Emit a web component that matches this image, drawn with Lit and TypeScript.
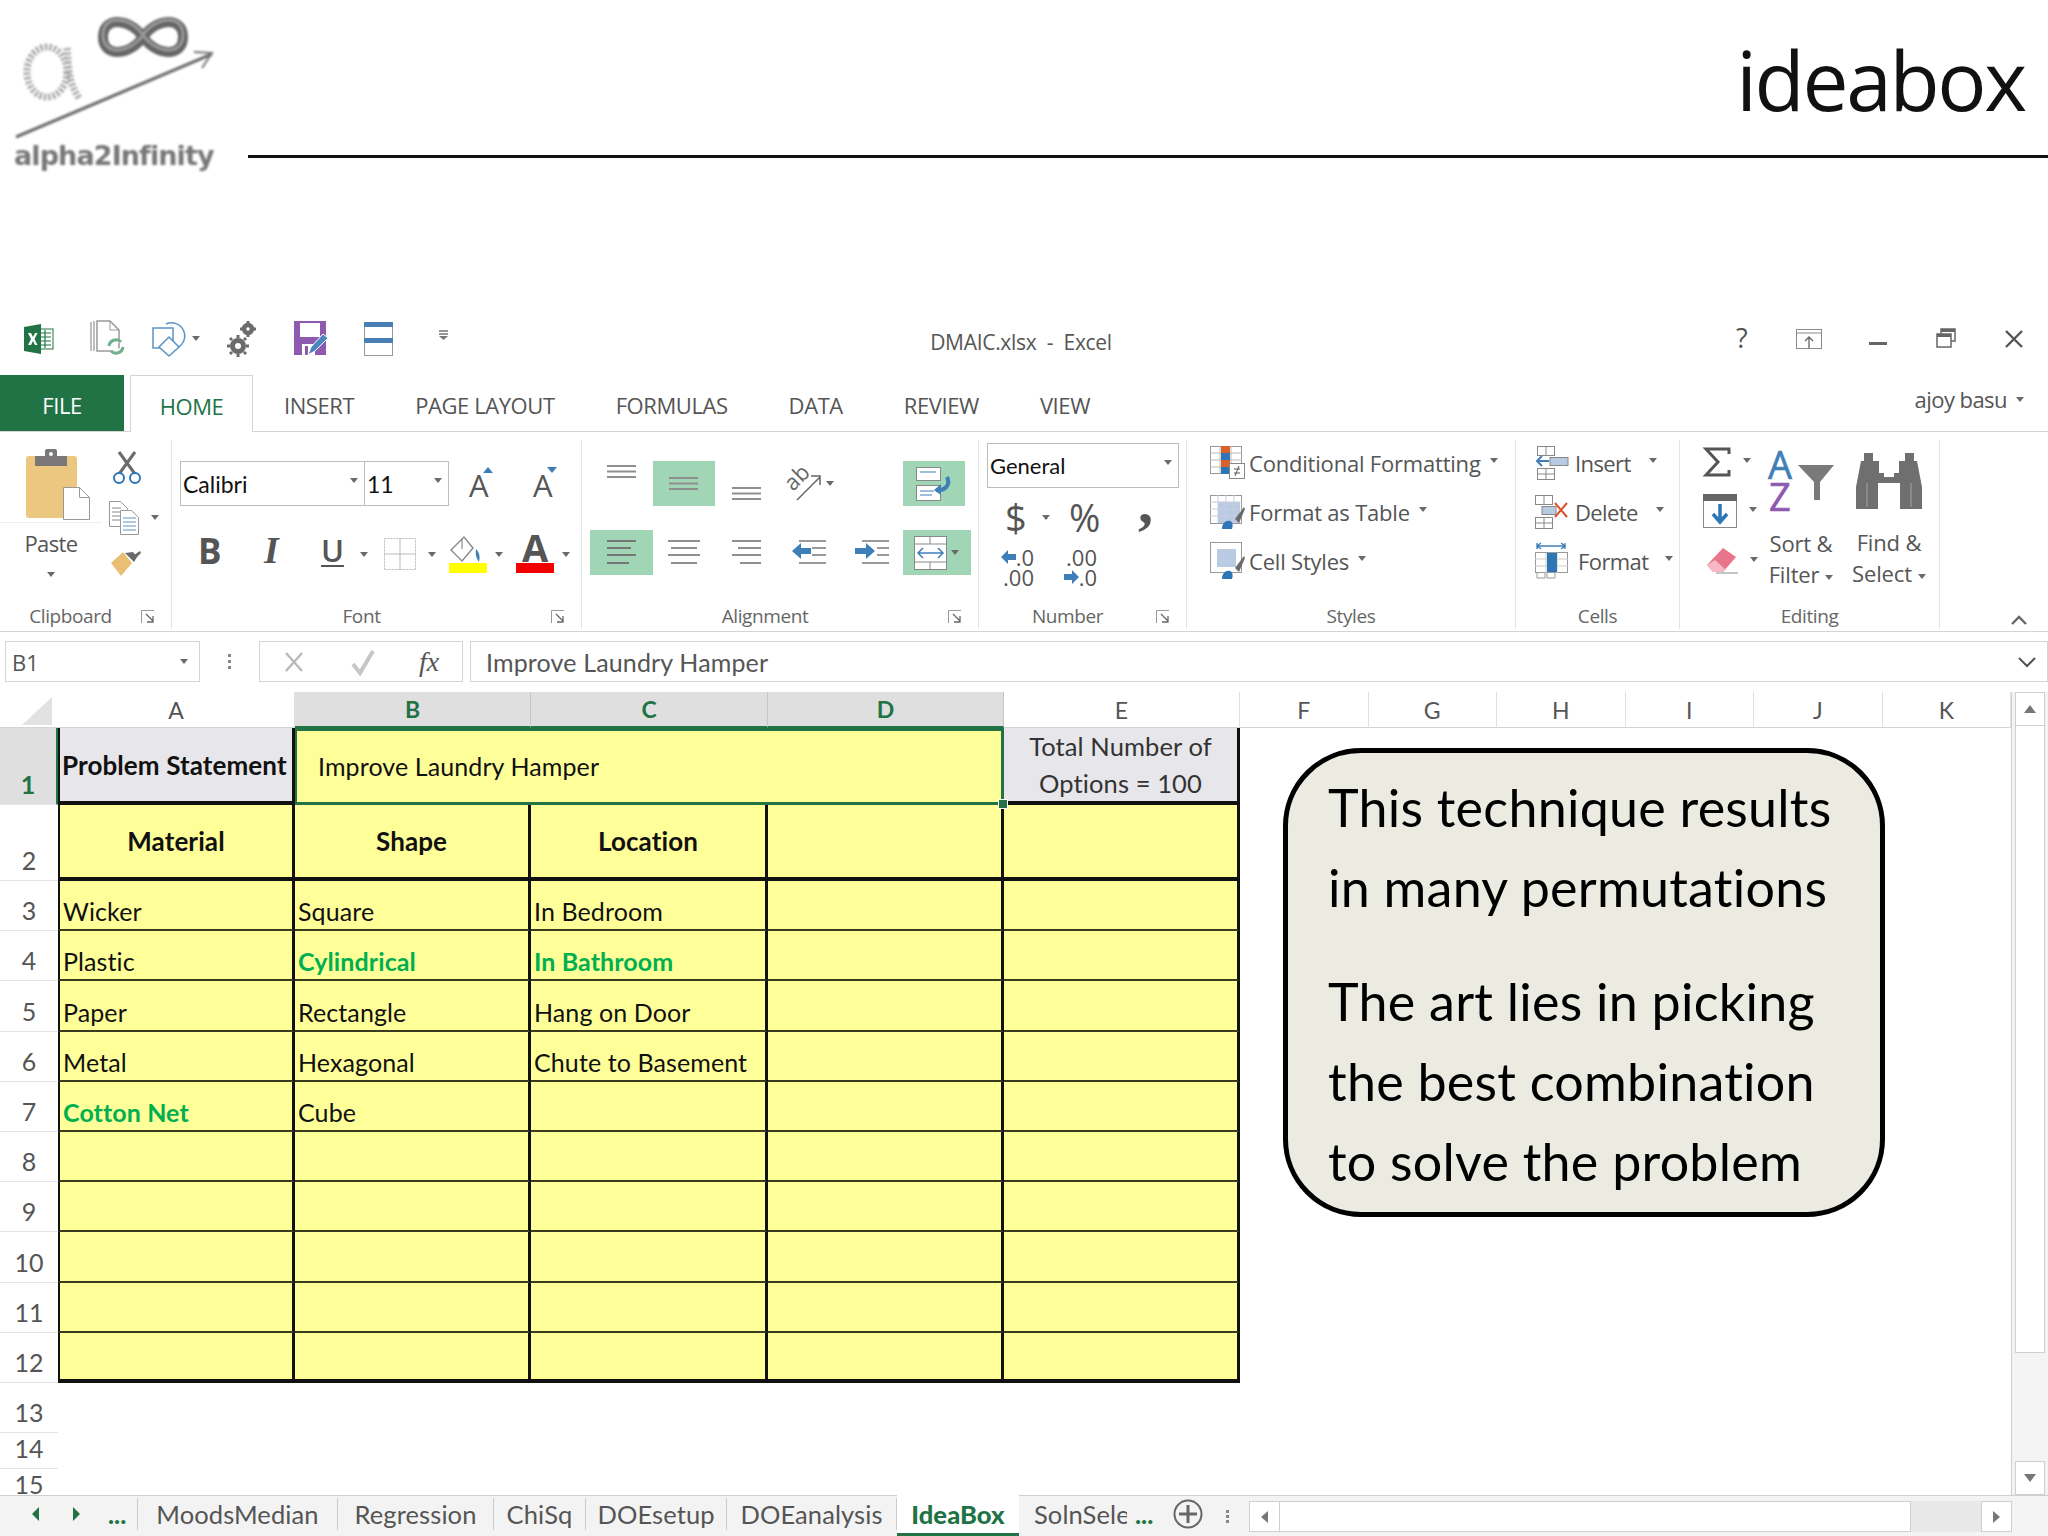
import { LitElement, html, svg, css } from 'lit';
import { customElement } from 'lit/decorators.js';

const ic = (w: number, h: number, body: unknown) =>
  html`<svg class="ic" width=${w} height=${h} viewBox="0 0 ${w} ${h}">${body}</svg>`;
const dd = html`<i class="dd"></i>`;

const BLUE = '#3f7fb8';
const lines = (x: number, y: number, w: number, n: number, step: number) =>
  Array.from({ length: n }, (_, i) => svg`<rect x=${x} y=${y + i * step} width=${w} height="2" fill="#8f8f8f"></rect>`);

const icons = {
  excel: ic(30, 30, svg`<rect x="13" y="5" width="16" height="20" fill="#fff" stroke="#217346"></rect>
    <path d="M17 9h10M17 13h10M17 17h10M17 21h10M21 6v18" stroke="#217346" stroke-width="1.2"></path>
    <path d="M0 3l17-3v30L0 27z" fill="#217346"></path><path d="M4 9l3 0 2 4 2-4 2.500 0-3 6 3 6-2.500 0-2-4-2 4-3 0 3-6z" fill="#fff"></path>`),
  doc: ic(36, 37, svg`<path d="M1 2v29M4 1v30" stroke="#aaa" fill="none" stroke-width="1.500"></path>
    <path d="M7 1h13l9 9v21H7z" fill="#fff" stroke="#999" stroke-width="1.500"></path><path d="M20 1v9h9" fill="none" stroke="#999"></path>
    <path d="M19 26a7 7 0 0 1 12-4M33 27a7 7 0 0 1-12 4" fill="#fff" stroke="#6fb08f" stroke-width="3"></path>`),
  shapes: ic(37, 36, svg`<rect x="1" y="7" width="20" height="20" fill="none" stroke="#5b93c4" stroke-width="1.500"></rect>
    <path d="M14 3a13 13 0 1 1 11 24" fill="none" stroke="#5b93c4" stroke-width="1.500"></path>
    <path d="M17 16l-10 10 10 9 10-9z" fill="#fff" stroke="#5b93c4" stroke-width="1.500"></path>`),
  gears: ic(30, 36, svg`<circle cx="21" cy="8" r="4" fill="none" stroke="#6b6b6b" stroke-width="4.500"></circle>
    <circle cx="11" cy="25" r="5.500" fill="none" stroke="#6b6b6b" stroke-width="5"></circle>
    <path d="M21 0v2M21 14v2M13 8h2M27 8h2M11 14v3M11 33v3M0 25h3M19 25h3M3 17l2 2M17 31l2 2M19 17l-2 2M3 33l2-2" stroke="#6b6b6b" stroke-width="3"></path>`),
  save: ic(34, 35, svg`<path d="M0 0h32v34H0z" fill="#8e5ab0"></path><rect x="6" y="2" width="20" height="14" fill="#fff"></rect>
    <rect x="8" y="23" width="13" height="11" fill="#fff"></rect><rect x="11" y="25" width="3" height="9" fill="#8e5ab0"></rect>
    <path d="M14 34l3-8L29 13l5 4-13 13z" fill="#4a86c0" stroke="#fff"></path>`),
  form: ic(29, 34, svg`<rect x=".5" y=".5" width="28" height="33" fill="#fff" stroke="#999"></rect>
    <rect x="0" y="0" width="29" height="5" fill="#4a7fb5"></rect><rect x="0" y="16" width="29" height="5" fill="#4a7fb5"></rect>`),
  qatMore: ic(9, 9, svg`<path d="M0 0h9M0 3h9" stroke="#777" stroke-width="1.300"></path><path d="M0 5h9l-4.500 4z" fill="#777"></path>`),
  display: ic(26, 20, svg`<rect x=".5" y=".5" width="25" height="19" fill="#fff" stroke="#8a8a8a"></rect><path d="M0 4h26" stroke="#8a8a8a"></path>
    <path d="M13 19V8M9 12l4-4 4 4" fill="none" stroke="#666" stroke-width="1.300"></path>`),
  min: ic(18, 3, svg`<rect width="18" height="3" fill="#666"></rect>`),
  restore: ic(20, 21, svg`<rect x="5" y="1" width="14" height="12" fill="#fff" stroke="#666" stroke-width="1.500"></rect><rect x="5" y="1" width="14" height="3" fill="#666"></rect>
    <rect x="1" y="6" width="14" height="13" fill="#fff" stroke="#666" stroke-width="1.500"></rect><rect x="1" y="6" width="14" height="3" fill="#666"></rect>`),
  close: ic(20, 18, svg`<path d="M2 1l16 16M18 1L2 17" stroke="#555" stroke-width="2.400"></path>`),
  paste: ic(64, 71, svg`<rect x="0" y="7" width="51" height="62" rx="3" fill="#ecc77f"></rect>
    <rect x="9" y="7" width="32" height="10" fill="#7b7778"></rect><rect x="19" y="0" width="12" height="9" rx="2" fill="#7b7778"></rect><circle cx="25" cy="5" r="2" fill="#fff"></circle>
    <path d="M37.500 38.500h16l10 10v22h-26z" fill="#fff" stroke="#999"></path><path d="M53.500 38.500v10h10" fill="none" stroke="#999"></path>`),
  scissors: ic(30, 34, svg`<path d="M23 23L7 1M7 23L23 1" stroke="#6b6b6b" stroke-width="3"></path>
    <circle cx="7" cy="27" r="5" fill="#fff" stroke="#2e75b6" stroke-width="2"></circle><circle cx="23" cy="27" r="5" fill="#fff" stroke="#2e75b6" stroke-width="2"></circle>`),
  copy: ic(30, 34, svg`<path d="M.5.5h11l7 7v18H.5z" fill="#fff" stroke="#999"></path><path d="M3 7h9M3 11h12M3 15h12M3 19h12" stroke="#888"></path>
    <path d="M11.500 9.500h11l7 7v17h-18z" fill="#fff" stroke="#999"></path><path d="M14 17h13M14 21h13M14 25h13M14 29h13" stroke="#5b93c4"></path>`),
  painter: ic(30, 26, svg`<path d="M0 13L12 2l9 11-11 13z" fill="#e9bf73"></path><path d="M14 3l8-1 4 5-3 5z" fill="#6b6b6b"></path><path d="M23 5l6-4 1 2-5 5z" fill="#6b6b6b"></path>`),
  launcher: ic(13, 13, svg`<path d="M.5 13V.5H13" fill="none" stroke="#999"></path><path d="M5 4l7 7M12 6v6H6" fill="none" stroke="#666" stroke-width="1.300"></path>`),
  borders: ic(32, 32, svg`<rect x=".5" y=".5" width="31" height="31" fill="none" stroke="#bbb" stroke-dasharray="2 1"></rect><path d="M16 0v32M0 16h32" stroke="#bbb"></path>`),
  fill: ic(38, 37, svg`<path d="M15 1l-13 13 11 11 11-13z" fill="#fff" stroke="#888" stroke-width="1.400"></path><path d="M13 3v10" stroke="#777"></path>
    <path d="M27 13c4 4 4 9 3 13-2-3-4-6-3-13z" fill="#3f7fb8"></path><rect x="0" y="27" width="38" height="10" fill="#ffff00"></rect>`),
  fontColor: ic(38, 38, svg`<text x="19" y="27" text-anchor="middle" class="big-a">A</text><rect x="0" y="28" width="38" height="10" fill="#f00000"></rect>`),
  valign: ic(29, 13, svg`${lines(0, 0, 29, 3, 5.500)}`),
  left: ic(29, 25, svg`<rect y="0" width="29" height="2" fill="#777"></rect><rect y="7" width="24" height="2" fill="#777"></rect><rect y="14" width="29" height="2" fill="#777"></rect><rect y="22" width="22" height="2" fill="#777"></rect>`),
  center: ic(32, 25, svg`<rect y="0" width="32" height="2" fill="#8f8f8f"></rect><rect x="3" y="7" width="26" height="2" fill="#8f8f8f"></rect><rect y="14" width="32" height="2" fill="#8f8f8f"></rect><rect x="3" y="22" width="26" height="2" fill="#8f8f8f"></rect>`),
  right: ic(29, 25, svg`<rect y="0" width="29" height="2" fill="#8f8f8f"></rect><rect x="6" y="7" width="23" height="2" fill="#8f8f8f"></rect><rect y="14" width="29" height="2" fill="#8f8f8f"></rect><rect x="8" y="22" width="21" height="2" fill="#8f8f8f"></rect>`),
  outdent: ic(34, 25, svg`<path d="M7 1h27M20 8h14M20 15h14M7 23h27" stroke="#999" stroke-width="2"></path><path d="M0 11l9-8v5h10v6H9v5z" fill="${BLUE}"></path>`),
  indent: ic(34, 25, svg`<path d="M7 1h27M22 8h12M22 15h12M7 23h27" stroke="#999" stroke-width="2"></path><path d="M20 11l-9-8v5H0v6h11v5z" fill="${BLUE}"></path>`),
  orient: ic(37, 34, svg`<text x="8" y="25" transform="rotate(-45 8 25)" class="ab">ab</text><path d="M12 33L35 10M26 9h9v9" fill="none" stroke="#666" stroke-width="1.500"></path>`),
  wrap: ic(36, 34, svg`<rect x=".5" y=".5" width="24" height="13" fill="#fff" stroke="#888"></rect><rect x=".5" y="18.500" width="24" height="15" fill="#fff" stroke="#888"></rect>
    <path d="M4 5h16M4 24h14M4 28h12" stroke="${BLUE}" stroke-width="1.200"></path><path d="M31 10c4 8-2 14-11 13" fill="none" stroke="${BLUE}" stroke-width="4"></path><path d="M18 23l7-6v11z" fill="${BLUE}"></path>`),
  merge: ic(33, 34, svg`<rect x=".5" y=".5" width="32" height="33" fill="#fff" stroke="#888"></rect><path d="M0 8h33M0 26h33M16 0v8M16 26v8" stroke="#888"></path>
    <path d="M4 17h25M9 12l-5 5 5 5M24 12l5 5-5 5" fill="none" stroke="${BLUE}" stroke-width="1.500"></path>`),
  arrowL: ic(15, 14, svg`<path d="M0 7l7-7v4h8v6H7v4z" fill="${BLUE}"></path>`),
  arrowR: ic(15, 14, svg`<path d="M15 7L8 0v4H0v6h8v4z" fill="${BLUE}"></path>`),
  cond: ic(35, 33, svg`<rect x=".5" y=".5" width="31" height="27" fill="#fff" stroke="#999"></rect><path d="M0 7h32M0 14h32M0 21h32M10 0v28M21 0v28" stroke="#bbb"></path>
    <rect x="11" y="0" width="9" height="7" fill="#d9622b"></rect><rect x="11" y="7" width="9" height="7" fill="#2e75b6"></rect><rect x="11" y="14" width="9" height="7" fill="#d9622b"></rect><rect x="11" y="21" width="9" height="7" fill="#2e75b6"></rect>
    <rect x="19.500" y="17.500" width="15" height="15" fill="#fff" stroke="#888"></rect><path d="M24 23h6M24 27h6M29 20l-4 10" stroke="#555"></path>`),
  table: ic(35, 34, svg`<rect x=".5" y=".5" width="31" height="28" fill="#fff" stroke="#999"></rect><rect x="8" y="7" width="22" height="21" fill="#b9cbe2"></rect><path d="M0 7h32M0 14h32M0 21h32M8 0v28M16 0v28M24 0v28" stroke="#ccd"></path>
    <path d="M25 24L34 12l1 2-6 14z" fill="#6b6b6b"></path><path d="M12 34c0-6 4-9 8-8 3 1 3 5 2 8z" fill="#2e75b6"></path>`),
  cellStyle: ic(35, 37, svg`<rect x=".5" y=".5" width="31" height="30" fill="#fff" stroke="#999"></rect><rect x="7" y="7" width="19" height="18" fill="#b9cbe2"></rect>
    <path d="M25 26L34 14l1 2-6 14z" fill="#6b6b6b"></path><path d="M12 37c0-6 4-9 8-8 3 1 3 5 2 8z" fill="#2e75b6"></path>`),
  cellIns: ic(34, 34, svg`<rect x="2.500" y=".5" width="17" height="9" fill="#fff" stroke="#888"></rect><path d="M11 0v10" stroke="#888"></path><rect x="2.500" y="22.500" width="17" height="11" fill="#fff" stroke="#888"></rect><path d="M11 22v12M2 28h18" stroke="#888"></path>
    <rect x="15" y="11.500" width="18" height="8" fill="#b9cbe2" stroke="#888"></rect><path d="M14 15H2M7 10l-5 5 5 5" fill="none" stroke="${BLUE}" stroke-width="2"></path>`),
  cellDel: ic(34, 34, svg`<rect x=".5" y=".5" width="17" height="9" fill="#fff" stroke="#888"></rect><path d="M9 0v10" stroke="#888"></path><rect x=".5" y="22.500" width="17" height="11" fill="#fff" stroke="#888"></rect><path d="M9 22v12M0 28h18" stroke="#888"></path>
    <rect x="7" y="11.500" width="14" height="8" fill="#b9cbe2" stroke="#888"></rect><path d="M20 8l12 14M32 8L20 22" stroke="#d9502b" stroke-width="2"></path>`),
  cellFmt: ic(34, 36, svg`<path d="M2 3h28M6 0l-4 3 4 3M26 0l4 3-4 3M2 0v6M30 0v6" fill="none" stroke="${BLUE}" stroke-width="1.300"></path><rect x=".5" y="9.500" width="32" height="20" fill="#fff" stroke="#999"></rect>
    <path d="M11 10v20M22 10v20M0 16h33M0 23h33" stroke="#ccc"></path><rect x="12" y="10" width="10" height="19" fill="#2e75b6"></rect><path d="M2 30v5h8v-5M12 30v5h8v-5" fill="none" stroke="#999"></path>`),
  sigma: ic(28, 30, svg`<path d="M26 7V2H3l12 13L3 28h23v-5" fill="none" stroke="#555" stroke-width="3"></path>`),
  fillDown: ic(34, 34, svg`<rect x=".5" y=".5" width="33" height="33" fill="#fff" stroke="#888"></rect><rect width="34" height="7" fill="#666"></rect>
    <path d="M17 10v18M10 20l7 8 7-8" fill="none" stroke="#2e75b6" stroke-width="3.500"></path>`),
  eraser: ic(32, 26, svg`<path d="M1 17L17 0l13 9-13 15H7z" fill="#e9748c"></path><path d="M1 17l6 7h10l2-3-10-9z" fill="#f5b8c4"></path><path d="M10 25h22" stroke="#888"></path>`),
  sort: ic(66, 60, svg`<text x="0" y="27" class="az-a">A</text><text x="1" y="59" class="az-z">Z</text>
    <path d="M30 13h36L52 30v18h-6V30z" fill="#7a7a7a"></path>`),
  binoc: ic(66, 56, svg`<path d="M8 0h9v8h6v12h20V8h6V0h9v8h3l5 26v22H44V30H22v26H0V34L5 8h3z" fill="#6f6f6f"></path><rect x="28" y="20" width="10" height="4" fill="#fff"></rect><path d="M11 30v24M55 30v24" stroke="#8a8a8a" stroke-width="2"></path>`),
  chev: ic(16, 10, svg`<path d="M1 9l7-7 7 7" fill="none" stroke="#666" stroke-width="2.400"></path>`),
  check: ic(24, 24, svg`<path d="M2 14l7 9L22 1" fill="none" stroke="#c6c6c6" stroke-width="4"></path>`),
  cross: ic(20, 22, svg`<path d="M2 2l16 18M18 2L2 20" stroke="#b9b9b9" stroke-width="2.400"></path>`),
  plus: ic(30, 30, svg`<circle cx="15" cy="15" r="13.500" fill="none" stroke="#666" stroke-width="2"></circle><path d="M15 6v18M6 15h18" stroke="#666" stroke-width="3"></path>`),
  logo: ic(215, 170, svg`
    <path d="M143 27C130 8 103 6 103 27C103 48 130 46 143 27C156 8 183 6 183 27C183 48 156 46 143 27Z" fill="none" stroke="#666" stroke-width="10"></path>
    <path d="M143 27C130 8 103 6 103 27C103 48 130 46 143 27C156 8 183 6 183 27C183 48 156 46 143 27Z" transform="translate(0 -2)" fill="none" stroke="#9a9a9a" stroke-width="3"></path>
    <g fill="none" stroke="#a8a8a8" stroke-width="7" stroke-dasharray="2.500 2">
      <ellipse cx="47" cy="62" rx="20" ry="25"></ellipse><path d="M67 38c2 16 0 32 12 50"></path>
    </g>
    <path d="M16 127L212 44" stroke="#6e6e6e" stroke-width="3"></path><path d="M194 42l18 1-10 15" fill="none" stroke="#777" stroke-width="2"></path>
    <text x="14" y="155" class="logo-text">alpha2Infinity</text>`),
};

const RIBBON_TABS = ['INSERT', 'PAGE LAYOUT', 'FORMULAS', 'DATA', 'REVIEW', 'VIEW'];
const COLS = ['A', 'B', 'C', 'D', 'E', 'F', 'G', 'H', 'I', 'J', 'K'];
const BODY: [string, string, string, boolean, boolean][] = [
  ['Wicker', 'Square', 'In Bedroom', false, false],
  ['Plastic', 'Cylindrical', 'In Bathroom', false, true],
  ['Paper', 'Rectangle', 'Hang on Door', false, false],
  ['Metal', 'Hexagonal', 'Chute to Basement', false, false],
  ['Cotton Net', 'Cube', '', true, false],
  ['', '', '', false, false],
  ['', '', '', false, false],
  ['', '', '', false, false],
  ['', '', '', false, false],
  ['', '', '', false, false],
];

@customElement('app-root')
export class AppRoot extends LitElement {
  static styles = css`
    :host { display: block; position: relative; width: 2048px; height: 1536px; overflow: hidden; background: #fff;
      font-family: "Open Sans", "Liberation Sans", sans-serif; color: #555; }
    * { box-sizing: border-box; }
    .ic { display: block; flex: none; overflow: visible; }
    .dd { display: block; flex: none; width: 0; height: 0; border-left: 4px solid transparent; border-right: 4px solid transparent; border-top: 5px solid #6a6a6a; }
    .ab { font: 22px "Open Sans", sans-serif; fill: #666; }
    .big-a { font: bold 38px "Open Sans", sans-serif; fill: #555; }
    .az-a { font: 38px "Open Sans", sans-serif; fill: #3f7fb8; stroke: #3f7fb8; stroke-width: .6px; }
    .az-z { font: 38px "Open Sans", sans-serif; fill: #8e5ab0; stroke: #8e5ab0; stroke-width: .6px; }
    .logo-text { font: bold 27px "DejaVu Sans", sans-serif; fill: #777; letter-spacing: -.9px; }

    .head { display: flex; height: 310px; align-items: flex-start; }
    .logo { width: 248px; flex: none; padding: 10px 0 0 0; filter: blur(1px); }
    .head-main { flex: 1; height: 158px; border-bottom: 3px solid #111; text-align: right; padding-right: 23px;
      font: 82px/1 "Open Sans", sans-serif; letter-spacing: -2.300px; color: #111; padding-top: 38px; }

    .titlebar { display: flex; height: 65px; align-items: center; position: relative; padding-bottom: 8px; }
    .qat { display: grid; grid-template-columns: 66px 62px 41px 34px 67px 70px 30px; padding-left: 24px; align-items: center; }
    .qat-pair { display: flex; align-items: center; gap: 3px; }
    .qat-more { margin: -6px 0 0 45px; }
    .doc-title { position: absolute; left: 0; right: 6px; text-align: center; top: 18px; font-size: 21px; letter-spacing: -.3px; white-space: pre; }
    .winbtns { margin-left: auto; display: grid; grid-template-columns: 55px 73px 67px 68px 44px; align-items: center; justify-items: start; }
    .winbtns .ic:nth-of-type(2) { margin-top: 10px; }
    .help { font-size: 27px; margin-left: -5px; margin-top: -2px; }

    .tabs { display: flex; height: 56px; align-items: stretch; position: relative; z-index: 1; font-size: 22px; letter-spacing: -.42px; color: #555; }
    .tab { display: flex; align-items: center; justify-content: center; padding-top: 4px; }
    .tab.file { width: 124px; background: #217346; color: #fff; margin-right: 6px; }
    .tab.home { width: 123px; color: #217346; background: #fff; border: 1px solid #d4d4d4; border-bottom: 0; height: 57px; margin-right: 31px; }
    .tab.plain { margin-right: 61px; }
    .user { margin-left: auto; padding-right: 24px; display: flex; align-items: center; gap: 9px; font-size: 22px; letter-spacing: -.55px; padding-bottom: 8px; }

    .ribbon { display: flex; height: 201px; border-top: 1px solid #d4d4d4; border-bottom: 1px solid #d4d4d4; padding-top: 8px; }
    .group { display: flex; flex-direction: column; height: 189px; border-right: 1px solid #e4e4e4; flex: none; }
    .body { flex: 1; min-height: 0; }
    .foot { height: 26px; display: grid; grid-template-columns: 1fr 30px; align-items: center; font-size: 19px; letter-spacing: -.4px; color: #666; text-align: center; }
    .foot.wide { grid-template-columns: 1fr; }
    .clip { width: 172px; } .font { width: 410px; } .align { width: 397px; } .number { width: 208px; }
    .styles { width: 329px; } .cells { width: 164px; } .editing { width: 260px; }
    .clip .body { display: grid; grid-template-columns: 108px 1fr; padding-top: 9px; }
    .paste { padding-left: 26px; }
    .paste-label { margin: 2px 0 0 -26px; padding-top: 5px; text-align: center; font-size: 22px; letter-spacing: -.6px; line-height: 30px; border-top: 1px solid #eee; width: 102px; }
    .paste-dd { margin: 14px 0 0 21px; }
    .clip-tools { display: flex; flex-direction: column; margin-top: -7px; }
    .clip-tools .row { display: flex; align-items: center; gap: 12px; height: 49px; padding-left: 1px; }
    .clip-tools .scissors { padding-left: 4px; height: 51px; }
    .clip-tools .paint { height: auto; padding: 8px 0 0 3px; }

    .font .body { padding: 21px 0 0 8px; }
    .font-row { display: flex; align-items: stretch; height: 45px; }
    .select { display: flex; align-items: center; border: 1px solid #bdbdbd; background: #fff; font: 23px "Lato", sans-serif; color: #111; padding: 0 6px 0 2px; justify-content: space-between; }
    .select .dd { margin-top: -6px; }
    .s-font { width: 185px; } .s-size { width: 84px; border-left: 0; }
    .grow { position: relative; margin-left: 20px; width: 22px; font-size: 31px; line-height: 48px; color: #555; }
    .grow.shrink { margin-left: 42px; }
    .grow::after { content: ''; position: absolute; right: -2px; top: 6px; border-left: 5px solid transparent; border-right: 5px solid transparent; }
    .grow.up::after { border-bottom: 6px solid #3f7fb8; }
    .grow.shrink::after { border-top: 6px solid #3f7fb8; }
    .font-tools { display: grid; grid-template-columns: 66px 57px 39px 24px 44px 21px 46px 21px 46px 8px; margin: 29px 0 0 18px; align-items: center; height: 37px; }
    .fmt { font-size: 35px; line-height: 37px; color: #555; margin-top: -8px; }
    .fmt.b { font-weight: 700; }
    .fmt.i { font: italic 700 38px/37px "Liberation Serif", serif; }
    .fmt.u { text-decoration: underline; text-underline-offset: 3px; text-decoration-thickness: 2px; font-weight: 600; font-size: 31px; }

    .align .body { display: grid; grid-template-columns: repeat(5, 62.600px) 68px; grid-template-rows: 45px 45px; row-gap: 24px; padding: 21px 0 0 8px; }
    .acell { display: flex; align-items: center; justify-content: center; gap: 4px; }
    .acell.on { background: #a0d5b6; }
    .acell.at { align-items: flex-start; padding-top: 4px; }
    .acell.ab-b { align-items: flex-end; padding-bottom: 6px; }
    .acell.w { width: 62px; }

    .number .body { padding: 3px 0 0 8px; }
    .s-num { width: 192px; height: 45px; align-items: center; font-size: 22px; }
    .num-sym { display: grid; grid-template-columns: 37px 27px 69px 20px; margin: 3px 0 0 18px; align-items: center; height: 40px; color: #555; font-size: 38px; }
    .comma { font: bold 60px/40px "Liberation Serif", serif; margin-top: -28px; }
    .dec { display: grid; grid-template-columns: 41px 63px; margin: 16px 0 0 6px; font-size: 22px; line-height: 20px; color: #555; }
    .dec-line { display: flex; align-items: center; justify-content: flex-end; }

    .list { padding: 0; margin-top: -2px; display: flex; flex-direction: column; }
    .list-row { display: flex; align-items: center; height: 49px; font-size: 22px; letter-spacing: -.2px; }
    .styles .list-row { padding-left: 23px; gap: 4px; } .styles .dd { margin-left: 5px; margin-top: -4px; }
    .cells .list-row { padding-left: 19px; gap: 6px; letter-spacing: -.6px; }
    .cells .dd { margin-top: -5px; }
    .ins .dd { margin-left: 12px; } .del .dd { margin-left: 12px; } .fmtc .dd { margin-left: 8px; }
    .cells .fmtc { gap: 9px; }
    .editing .body { display: grid; grid-template-columns: 54px 88px 88px; padding: 7px 0 0 23px; }
    .ecol { display: flex; flex-direction: column; }
    .edit-row { display: flex; align-items: center; gap: 12px; }
    .edit-row.r2 { margin-top: 17px; } .edit-row.r3 { margin-top: 20px; padding-left: 3px; }
    .edit-row .dd { margin-top: -4px; }
    .big { display: flex; flex-direction: column; align-items: center; font-size: 22px; line-height: 31px; letter-spacing: -.15px; text-align: center; padding-top: 5px; }
    .big .txt { margin-top: 16px; }
    .big.find { padding-top: 6px; } .big.find .txt { margin-top: 18px; }
    .txt .dd { display: inline-block; margin: 0 0 3px 6px; }
    .collapse { flex: 1; display: flex; justify-content: flex-end; align-items: flex-end; padding: 0 21px 6px 0; }

    .fbar { display: flex; height: 41px; margin-top: 9px; align-items: stretch; padding-left: 5px; }
    .box { border: 1px solid #d4d4d4; background: #fff; display: flex; align-items: center; }
    .name { width: 195px; padding: 0 11px 0 6px; justify-content: space-between; font-size: 22px; }
    .vdots { width: 59px; display: flex; flex-direction: column; align-items: center; justify-content: center; gap: 3px; }
    .vdots i { width: 3px; height: 3px; background: #888; }
    .fbtns { width: 204px; padding-left: 24px; display: grid; grid-template-columns: 67px 68px 40px; align-items: center; }
    .fx { font: italic 28px "Liberation Serif", serif; color: #555; }
    .finput { flex: 1; margin-left: 7px; padding: 0 11px 0 15px; justify-content: space-between; font: 25px "Lato", sans-serif; letter-spacing: .15px; }
    .finput .ic { margin-left: auto; }

    .sheet { display: flex; height: 803px; margin-top: 10px; overflow: hidden; position: relative; }
    .grid { display: grid; width: 2011px; grid-template-columns: 58px 237px 236px 237px 236px 236px repeat(6, 128.500px);
      grid-template-rows: 36px 77px 76px repeat(10, 50.200px) 50px 36px 36px; font-family: "Lato", sans-serif; color: #111; }
    .ch { display: flex; align-items: flex-end; justify-content: center; font: 23px/33px "Lato", sans-serif; color: #555; border-right: 1px solid #e0e0e0; border-bottom: 1px solid #d4d4d4; }
    .ch.sel { background: #dfdfdf; color: #217346; font-weight: 700; border-bottom: 2px solid #217346; border-right-color: #c6c6c6; }
    .corner { display: flex; align-items: flex-end; justify-content: flex-end; padding: 0 4px 2px 0; border-bottom: 1px solid #d4d4d4; }
    .rh { display: flex; align-items: flex-end; justify-content: center; font: 25px/37px "Lato", sans-serif; color: #555; border-bottom: 1px solid #e4e4e4; padding-bottom: 1px; }
    .rh.sel { background: #dfdfdf; color: #217346; font-weight: 700; border-right: 2px solid #217346; }
    .cell { background: #ffff99; border-right: 3px solid #111; border-bottom: 2px solid #3a3a20; display: flex; align-items: flex-end; font-size: 25px; line-height: 30px; padding: 0 0 3px 3px; letter-spacing: .1px; overflow: hidden; white-space: nowrap; }
    .cell.a { border-left: 2px solid #111; }
    .cell.last { border-bottom-width: 4px; border-bottom-color: #111; }
    .cell.thick { border-bottom: 4px solid #111; }
    .cell.hdr { justify-content: center; align-items: center; font-weight: 700; padding: 0; font-size: 26px; }
    .cell.gray { background: #e7e6ea; }
    .cell.ps { align-items: center; font-weight: 700; padding: 0 0 0 2px; font-size: 26px; letter-spacing: .1px; }
    .cell.sel { grid-column: span 3; border: 3px solid #217346; border-left-width: 2px; align-items: center; padding: 0 0 2px 21px; position: relative; overflow: visible; }
    .handle { position: absolute; right: -7px; bottom: -7px; width: 10px; height: 10px; background: #217346; border: 1px solid #fff; }
    .cell.tot { align-items: center; justify-content: center; text-align: center; padding: 0; font-size: 25.500px; line-height: 37px; white-space: normal; color: #333; }
    .green { color: #00b050; font-weight: 700; }

    .callout { position: absolute; left: 1283px; top: 56px; width: 602px; height: 469px; background: #ebebe2; border: 5px solid #000; border-radius: 78px;
      padding: 14px 0 0 40px; font: 52px/80px "Lato", sans-serif; color: #000; letter-spacing: .25px; }
    .callout p { margin: 0; }
    .callout p + p { margin-top: 34px; }

    .vscroll { width: 37px; display: flex; flex-direction: column; padding: 0 3px 0 3px; background: #f3f3f3; border-left: 1px solid #cfcfcf; }
    .vbtn { height: 34px; background: #fff; border: 1px solid #cfcfcf; display: flex; align-items: center; justify-content: center; }
    .vthumb { height: 627px; background: #fff; border: 1px solid #cfcfcf; border-top: 0; }
    .vspace { flex: 1; }
    .tri-u { width: 0; height: 0; border-left: 6px solid transparent; border-right: 6px solid transparent; border-bottom: 8px solid #777; }
    .tri-d { width: 0; height: 0; border-left: 6px solid transparent; border-right: 6px solid transparent; border-top: 8px solid #777; }
    .tri-l { width: 0; height: 0; border-top: 6px solid transparent; border-bottom: 6px solid transparent; border-right: 7px solid #777; }
    .tri-r { width: 0; height: 0; border-top: 6px solid transparent; border-bottom: 6px solid transparent; border-left: 7px solid #777; }

    .sheetbar { display: grid; height: 41px; grid-template-columns: 138px 200px 156px 92px 141px 170px 122px 152px 43px 35px 763px 1fr; background: #f3f3f3; border-top: 1px solid #cfcfcf; align-items: stretch;
      font: 25.500px "Lato", sans-serif; letter-spacing: .1px; color: #555; }
    .nav { display: grid; grid-template-columns: 41px 41px 30px; padding-left: 32px; align-items: center; border-right: 1px solid #ccc; margin: 2px 0 6px; }
    .nav .tl { border-right-color: #217346; border-top-width: 7px; border-bottom-width: 7px; }
    .nav .tr { border-left-color: #217346; border-top-width: 7px; border-bottom-width: 7px; }
    .ell { color: #217346; font-weight: 900; letter-spacing: 0; }
    .nav .ell { margin-left: -6px; }
    .stab { display: flex; align-items: center; justify-content: center; border-right: 1px solid #ccc; margin: 2px 0 6px; white-space: nowrap; }
    .stab.on { background: #fff; margin: -1px 0 0; border-right: 0; color: #217346; font-weight: 900; border-bottom: 3px solid #217346; }
    .stab.more { border: 0; justify-content: flex-start; padding-left: 15px; gap: 8px; }
    .clipname { display: block; width: 93px; overflow: hidden; }
    .plusc { display: flex; align-items: center; justify-content: center; padding: 0 10px 4px 0; }
    .bar-dots { gap: 2px; width: 26px; }
    .hscroll { display: flex; margin: 5px 0 4px; }
    .hbtn { width: 31px; background: #fff; border: 1px solid #cfcfcf; display: flex; align-items: center; justify-content: center; }
    .hthumb { width: 632px; background: #fff; border: 1px solid #cfcfcf; border-left: 0; }
    .htrack { width: 70px; background: #e8e8e8; }
  `;

  private foot(label: string, launcher = true) {
    return launcher
      ? html`<div class="foot"><span>${label}</span>${icons.launcher}</div>`
      : html`<div class="foot wide"><span>${label}</span></div>`;
  }

  private ribbon() {
    return html`<div class="ribbon">
      <div class="group clip">
        <div class="body">
          <div class="paste">${icons.paste}<div class="paste-label">Paste</div><div class="paste-dd">${dd}</div></div>
          <div class="clip-tools">
            <div class="row scissors">${icons.scissors}</div>
            <div class="row">${icons.copy}${dd}</div>
            <div class="row paint">${icons.painter}</div>
          </div>
        </div>
        ${this.foot('Clipboard')}
      </div>
      <div class="group font">
        <div class="body">
          <div class="font-row">
            <div class="select s-font"><span>Calibri</span>${dd}</div>
            <div class="select s-size"><span>11</span>${dd}</div>
            <div class="grow up">A</div><div class="grow shrink">A</div>
          </div>
          <div class="font-tools">
            <span class="fmt b">B</span><span class="fmt i">I</span><span class="fmt u">U</span>${dd}
            ${icons.borders}${dd}${icons.fill}${dd}${icons.fontColor}${dd}
          </div>
        </div>
        ${this.foot('Font')}
      </div>
      <div class="group align">
        <div class="body">
          <div class="acell at">${icons.valign}</div>
          <div class="acell on">${icons.valign}</div>
          <div class="acell ab-b">${icons.valign}</div>
          <div class="acell">${icons.orient}${dd}</div>
          <div></div>
          <div class="acell on w">${icons.wrap}</div>
          <div class="acell on">${icons.left}</div>
          <div class="acell">${icons.center}</div>
          <div class="acell">${icons.right}</div>
          <div class="acell">${icons.outdent}</div>
          <div class="acell">${icons.indent}</div>
          <div class="acell on">${icons.merge}<i class="dd"></i></div>
        </div>
        ${this.foot('Alignment')}
      </div>
      <div class="group number">
        <div class="body">
          <div class="select s-num"><span>General</span>${dd}</div>
          <div class="num-sym"><span>$</span>${dd}<span>%</span><span class="comma">,</span></div>
          <div class="dec">
            <div class="dec-line">${icons.arrowL}.0</div><div class="dec-line">.00</div>
            <div class="dec-line">.00</div><div class="dec-line">${icons.arrowR}.0</div>
          </div>
        </div>
        ${this.foot('Number')}
      </div>
      <div class="group styles">
        <div class="body list">
          <div class="list-row">${icons.cond}<span>Conditional Formatting</span>${dd}</div>
          <div class="list-row">${icons.table}<span>Format as Table</span>${dd}</div>
          <div class="list-row">${icons.cellStyle}<span>Cell Styles</span>${dd}</div>
        </div>
        ${this.foot('Styles', false)}
      </div>
      <div class="group cells">
        <div class="body list">
          <div class="list-row ins">${icons.cellIns}<span>Insert</span>${dd}</div>
          <div class="list-row del">${icons.cellDel}<span>Delete</span>${dd}</div>
          <div class="list-row fmtc">${icons.cellFmt}<span>Format</span>${dd}</div>
        </div>
        ${this.foot('Cells', false)}
      </div>
      <div class="group editing">
        <div class="body">
          <div class="ecol">
            <div class="edit-row">${icons.sigma}${dd}</div>
            <div class="edit-row r2">${icons.fillDown}${dd}</div>
            <div class="edit-row r3">${icons.eraser}${dd}</div>
          </div>
          <div class="big">${icons.sort}<div class="txt">Sort &amp;<br />Filter<i class="dd"></i></div></div>
          <div class="big find">${icons.binoc}<div class="txt">Find &amp;<br />Select<i class="dd"></i></div></div>
        </div>
        ${this.foot('Editing', false)}
      </div>
      <div class="collapse">${icons.chev}</div>
    </div>`;
  }

  private grid() {
    return html`<div class="grid">
      <div class="corner">${ic(32, 28, svg`<path d="M30 0v28H0z" fill="#e2e2e2"></path>`)}</div>
      ${COLS.map((c) => html`<div class="ch ${c === 'B' || c === 'C' || c === 'D' ? 'sel' : ''}">${c}</div>`)}

      <div class="rh sel">1</div>
      <div class="cell gray ps a thick">Problem Statement</div>
      <div class="cell sel">Improve Laundry Hamper<span class="handle"></span></div>
      <div class="cell gray tot thick">Total Number of<br />Options = 100</div>
      <div></div><div></div><div></div><div></div><div></div><div></div>

      <div class="rh">2</div>
      <div class="cell hdr a thick">Material</div><div class="cell hdr thick">Shape</div><div class="cell hdr thick">Location</div>
      <div class="cell thick"></div><div class="cell thick"></div>
      <div></div><div></div><div></div><div></div><div></div><div></div>

      ${BODY.map((r, i) => {
        const last = i === BODY.length - 1 ? 'last' : '';
        const green = r[1] === 'Cylindrical';
        return html`<div class="rh">${i + 3}</div>
          <div class="cell a ${last} ${r[3] ? 'green' : ''}">${r[0]}</div>
          <div class="cell ${last} ${green ? 'green' : ''}">${r[1]}</div>
          <div class="cell ${last} ${r[4] ? 'green' : ''}">${r[2]}</div>
          <div class="cell ${last}"></div><div class="cell ${last}"></div>
          <div></div><div></div><div></div><div></div><div></div><div></div>`;
      })}
      ${[13, 14, 15].map(
        (n) => html`<div class="rh">${n}</div><div></div><div></div><div></div><div></div><div></div>
          <div></div><div></div><div></div><div></div><div></div><div></div>`,
      )}
    </div>`;
  }

  render() {
    return html`
      <div class="head">
        <div class="logo">${icons.logo}</div>
        <div class="head-main">ideabox</div>
      </div>

      <div class="titlebar">
        <div class="qat">
          ${icons.excel}${icons.doc}
          <div class="qat-pair">${icons.shapes}${dd}</div>
          <span></span>
          ${icons.gears}${icons.save}${icons.form}
        </div>
        <div class="qat-more">${icons.qatMore}</div>
        <div class="doc-title">DMAIC.xlsx  -  Excel</div>
        <div class="winbtns">
          <span class="help">?</span>${icons.display}${icons.min}${icons.restore}${icons.close}
        </div>
      </div>

      <div class="tabs">
        <div class="tab file">FILE</div>
        <div class="tab home">HOME</div>
        ${RIBBON_TABS.map((t) => html`<div class="tab plain">${t}</div>`)}
        <div class="user"><span>ajoy basu</span>${dd}</div>
      </div>

      ${this.ribbon()}

      <div class="fbar">
        <div class="box name"><span>B1</span>${dd}</div>
        <div class="vdots"><i></i><i></i><i></i></div>
        <div class="box fbtns">${icons.cross}${icons.check}<span class="fx">fx</span></div>
        <div class="box finput"><span>Improve Laundry Hamper</span>${ic(18, 10, svg`<path d="M1 1l8 8 8-8" fill="none" stroke="#555" stroke-width="2"></path>`)}</div>
      </div>

      <div class="sheet">
        ${this.grid()}
        <div class="vscroll">
          <div class="vbtn"><i class="tri-u"></i></div>
          <div class="vthumb"></div>
          <div class="vspace"></div>
          <div class="vbtn"><i class="tri-d"></i></div>
        </div>
        <div class="callout">
          <p>This technique results<br />in many permutations</p>
          <p>The art lies in picking<br />the best combination<br />to solve the problem</p>
        </div>
      </div>

      <div class="sheetbar">
        <div class="nav"><i class="tri-l tl"></i><i class="tri-r tr"></i><span class="ell">...</span></div>
        <div class="stab">MoodsMedian</div>
        <div class="stab">Regression</div>
        <div class="stab">ChiSq</div>
        <div class="stab">DOEsetup</div>
        <div class="stab">DOEanalysis</div>
        <div class="stab on">IdeaBox</div>
        <div class="stab more"><span class="clipname">SolnSele</span><span class="ell">...</span></div>
        <div class="plusc">${icons.plus}</div>
        <div class="vdots bar-dots"><i></i><i></i><i></i></div>
        <div class="hscroll">
          <div class="hbtn"><i class="tri-l"></i></div>
          <div class="hthumb"></div>
          <div class="htrack"></div>
          <div class="hbtn"><i class="tri-r"></i></div>
        </div>
      </div>
    `;
  }
}
